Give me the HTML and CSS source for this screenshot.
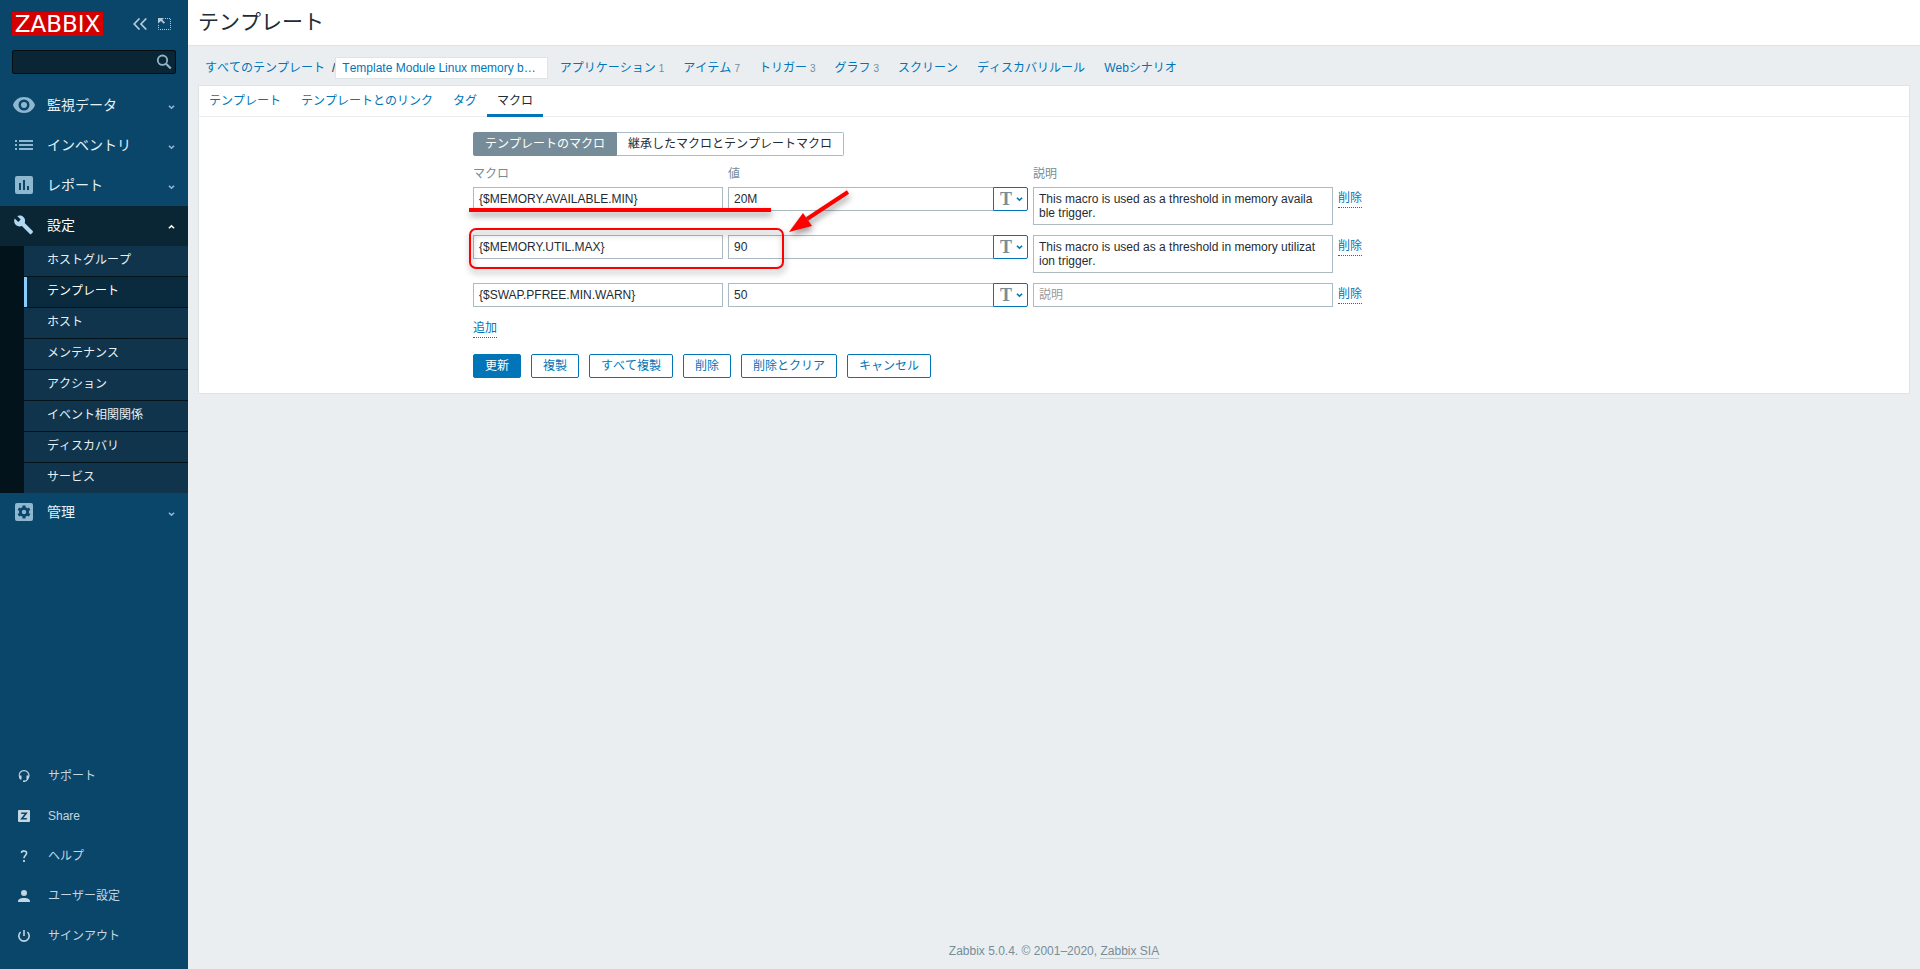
FILE: index.html
```html
<!DOCTYPE html>
<html lang="ja">
<head>
<meta charset="utf-8">
<title>テンプレート</title>
<link rel="stylesheet" href="styles.css">
</head>
<body>
<svg class="defs" width="0" height="0" aria-hidden="true">
  <symbol id="down" viewBox="0 0 8 6"><path d="M1 1.500 4 4.300 7 1.500" fill="none" stroke="currentColor" stroke-width="1.700"/></symbol>
  <symbol id="up" viewBox="0 0 8 6"><path d="M1 4.500 4 1.700 7 4.500" fill="none" stroke="currentColor" stroke-width="1.700"/></symbol>
</svg>
<aside class="sidebar">
  <div class="brand">
    <a class="logo" href="#">ZABBIX</a>
    <button class="icon-btn" type="button" aria-label="サイドバーを折りたたむ"><svg width="14" height="12" viewBox="0 0 14 12"><path d="M6.500 .5 1.200 6l5.300 5.500M13.300 .5 8 6l5.300 5.500" fill="none" stroke="currentColor" stroke-width="1.700"/></svg></button>
    <button class="icon-btn" type="button" aria-label="サイドバーを隠す"><svg width="13" height="12" viewBox="0 0 13 12"><path d="M7 .5H12.500V11.500H.5V6" fill="none" stroke="currentColor" stroke-dasharray="1 1"/><path d="M0 0h6L4.300 1.700 7 4.400 5.700 5.700 3 3 0 5.500z" fill="currentColor"/></svg></button>
  </div>
  <form class="search" role="search">
    <input type="text" aria-label="検索">
    <button type="button" aria-label="検索"><svg width="16" height="16" viewBox="0 0 16 16" fill="none" stroke="currentColor"><circle cx="6.500" cy="6.200" r="4.700" stroke-width="1.800"/><path d="m10 9.700 4.800 4.800" stroke-width="2.200"/></svg></button>
  </form>
  <nav class="menu">
    <a class="item" href="#"><svg class="ico" viewBox="0 0 24 24"><path fill-rule="evenodd" fill="currentColor" d="M12 4C6.500 4 2.500 7.500 1 12c1.500 4.500 5.500 8 11 8s9.500-3.500 11-8c-1.500-4.500-5.500-8-11-8zm0 2.500a5.500 5.500 0 1 1 0 11 5.500 5.500 0 0 1 0-11zM12 9a3 3 0 1 0 0 6 3 3 0 0 0 0-6z"/></svg><span>監視データ</span><svg class="arr"><use href="#down"/></svg></a>
    <a class="item" href="#"><svg class="ico" viewBox="0 0 24 24"><path fill="currentColor" d="M3 7h2v2H3zm4 0h14v2H7zM3 11h2v2H3zm4 0h14v2H7zM3 15h2v2H3zm4 0h14v2H7z"/></svg><span>インベントリ</span><svg class="arr"><use href="#down"/></svg></a>
    <a class="item" href="#"><svg class="ico" viewBox="0 0 24 24"><path fill="currentColor" fill-rule="evenodd" d="M5 3h14a2 2 0 0 1 2 2v14a2 2 0 0 1-2 2H5a2 2 0 0 1-2-2V5a2 2 0 0 1 2-2zm2 7v7h2v-7zm4-3v10h2V7zm4 6v4h2v-4z"/></svg><span>レポート</span><svg class="arr"><use href="#down"/></svg></a>
    <a class="item open" href="#"><svg class="ico" viewBox="0 0 24 24"><path fill="currentColor" d="m20.700 18-8-8c.8-2 .4-4.400-1.300-6C9.700 2.500 7.200 2.200 5.200 3.100l3.500 3.500-2.400 2.400L2.700 5.500c-1 2-.6 4.600 1 6.300 1.700 1.700 4.100 2.100 6.200 1.300l8 8c.4.400.9.400 1.300 0l1.500-1.700c.4-.3.400-.9 0-1.400z"/></svg><span>設定</span><svg class="arr"><use href="#up"/></svg></a>
    <div class="submenu">
      <a href="#">ホストグループ</a>
      <a class="current" href="#">テンプレート</a>
      <a href="#">ホスト</a>
      <a href="#">メンテナンス</a>
      <a href="#">アクション</a>
      <a href="#">イベント相関関係</a>
      <a href="#">ディスカバリ</a>
      <a href="#">サービス</a>
    </div>
    <a class="item" href="#"><svg class="ico" viewBox="0 0 24 24"><rect x="3" y="3" width="18" height="18" rx="2" fill="currentColor"/><g fill="#0a466a"><circle cx="12" cy="12" r="5"/><path d="M10.500 5.500h3v13h-3z"/><path d="M10.500 5.500h3v13h-3z" transform="rotate(60 12 12)"/><path d="M10.500 5.500h3v13h-3z" transform="rotate(120 12 12)"/></g><circle cx="12" cy="12" r="2.200" fill="currentColor"/></svg><span>管理</span><svg class="arr"><use href="#down"/></svg></a>
  </nav>
  <nav class="user-menu">
    <a href="#"><svg viewBox="0 0 12 12"><path d="M2.800 9C.8 7 1 4 2.200 2.400c1.800-2.300 5.800-2.300 7.600 0C11 4 11.200 7 9.700 9c-.7 1.500-1.700 2.200-3.200 2.200" fill="none" stroke="currentColor" stroke-width="1.200"/><path d="M1 5.500h2.500v4H2zM8.500 5.500H11l-1 4H8.500zM5 10.500h2.200V12H5z" fill="currentColor"/></svg>サポート</a>
    <a href="#"><svg viewBox="0 0 12 12"><rect width="12" height="12" rx="1" fill="currentColor"/><path d="M3.200 3.200h5L3.800 8.800h5" fill="none" stroke="#0a466a" stroke-width="1.600"/></svg>Share</a>
    <a href="#"><svg viewBox="0 0 12 12"><path d="M3.500 3C3.700.2 8.600.2 8.600 3.200c0 2-2.600 2.300-2.600 5" fill="none" stroke="currentColor" stroke-width="1.600"/><path d="M5.100 10h1.800v2H5.100z" fill="currentColor"/></svg>ヘルプ</a>
    <a href="#"><svg viewBox="0 0 12 12" fill="currentColor"><circle cx="6" cy="3" r="3"/><path d="M0 12v-1.500C1 8.500 3.500 8 6 8s5 .5 6 2.500V12z"/></svg>ユーザー設定</a>
    <a href="#"><svg viewBox="0 0 12 12" fill="none" stroke="currentColor" stroke-width="1.600"><path d="M2.600 2a5.200 5.200 0 1 0 6.800 0M6 0v6"/></svg>サインアウト</a>
  </nav>
</aside>
<div class="page">
  <header class="title"><h1>テンプレート</h1></header>
  <main>
    <nav class="crumbs">
      <a href="#">すべてのテンプレート</a><span class="slash">/</span><a class="selected" href="#">Template Module Linux memory b…</a>
      <ul>
        <li><a href="#">アプリケーション</a><sup>1</sup></li>
        <li><a href="#">アイテム</a><sup>7</sup></li>
        <li><a href="#">トリガー</a><sup>3</sup></li>
        <li><a href="#">グラフ</a><sup>3</sup></li>
        <li><a href="#">スクリーン</a></li>
        <li><a href="#">ディスカバリルール</a></li>
        <li><a href="#">Webシナリオ</a></li>
      </ul>
    </nav>
    <section class="card">
      <nav class="tabs">
        <a href="#">テンプレート</a><a href="#">テンプレートとのリンク</a><a href="#">タグ</a><a class="active" href="#">マクロ</a>
      </nav>
      <form class="form">
        <div class="segment"><button class="on" type="button">テンプレートのマクロ</button><button type="button">継承したマクロとテンプレートマクロ</button></div>
        <div class="macros">
          <table>
            <thead><tr><th class="c-name">マクロ</th><th class="c-value">値</th><th class="c-desc">説明</th><th></th></tr></thead>
            <tbody>
              <tr>
                <td><input type="text" aria-label="マクロ" value="{$MEMORY.AVAILABLE.MIN}"></td>
                <td><div class="value"><input type="text" aria-label="値" value="20M"><button type="button" aria-label="種別"><b>T</b><svg><use href="#down"/></svg></button></div></td>
                <td><textarea aria-label="説明" rows="2">This macro is used as a threshold in memory available trigger.</textarea></td>
                <td><button class="link" type="button">削除</button></td>
              </tr>
              <tr>
                <td><input type="text" aria-label="マクロ" value="{$MEMORY.UTIL.MAX}"></td>
                <td><div class="value"><input type="text" aria-label="値" value="90"><button type="button" aria-label="種別"><b>T</b><svg><use href="#down"/></svg></button></div></td>
                <td><textarea aria-label="説明" rows="2">This macro is used as a threshold in memory utilization trigger.</textarea></td>
                <td><button class="link" type="button">削除</button></td>
              </tr>
              <tr>
                <td><input type="text" aria-label="マクロ" value="{$SWAP.PFREE.MIN.WARN}"></td>
                <td><div class="value"><input type="text" aria-label="値" value="50"><button type="button" aria-label="種別"><b>T</b><svg><use href="#down"/></svg></button></div></td>
                <td><textarea aria-label="説明" rows="1" placeholder="説明"></textarea></td>
                <td><button class="link" type="button">削除</button></td>
              </tr>
            </tbody>
          </table>
          <svg class="marks" width="400" height="110" viewBox="0 0 400 110" fill="none" stroke="#f00" aria-hidden="true">
            <path d="M6 35H308" stroke-width="4"/>
            <rect x="7" y="54" width="313" height="39" rx="6" stroke-width="2"/>
            <path d="M344 44 385 17" stroke-width="4"/>
            <path d="M326 57 340 38 349 51z" fill="#f00" stroke="none"/>
          </svg>
        </div>
        <button class="link" type="button">追加</button>
        <div class="actions">
          <button class="primary" type="button">更新</button>
          <button type="button">複製</button>
          <button type="button">すべて複製</button>
          <button type="button">削除</button>
          <button type="button">削除とクリア</button>
          <button type="button">キャンセル</button>
        </div>
      </form>
    </section>
  </main>
  <footer>Zabbix 5.0.4. © 2001–2020, <a href="#">Zabbix SIA</a></footer>
</div>
</body>
</html>
```
FILE: styles.css
```css
* { box-sizing: border-box; }
body {
  margin: 0;
  display: flex;
  min-height: 100vh;
  background: #ebeef0;
  color: #1f2c33;
  font: 12px/14px "Liberation Sans", "Noto Sans CJK JP", sans-serif;
  font-kerning: none;
}
button, input, textarea { font: inherit; color: inherit; margin: 0; }
button { cursor: pointer; font-kerning: none; }
input { font-kerning: normal; }
a { color: #0275b8; text-decoration: none; }
.defs { position: absolute; }

/* Sidebar */
.sidebar {
  flex: 0 0 188px;
  display: flex;
  flex-direction: column;
  background: #0a466a;
}
.brand { display: flex; align-items: center; padding: 12px 17px 0 12px; }
.logo {
  width: 91px;
  margin-right: auto;
  background: #d40000;
  color: #fff;
  font-family: "DejaVu Sans", sans-serif;
  font-size: 23px;
  line-height: 24px;
  text-align: center;
}
.icon-btn {
  display: flex;
  padding: 0;
  margin-left: 11px;
  border: 0;
  background: none;
  color: #b3cbd9;
}
.search {
  display: flex;
  height: 24px;
  margin: 14px 12px 12px;
  border: 1px solid #030d13;
  border-radius: 2px;
  background: #0a2635;
}
.search input { flex: 1; min-width: 0; border: 0; background: none; color: #fff; }
.search button { display: flex; align-items: center; padding: 0 3px; border: 0; background: none; color: #8fb3c9; }
.item {
  display: flex;
  align-items: center;
  height: 40px;
  padding: 0 13px 2px 12px;
  color: #e6f0f6;
  font-size: 14px;
}
.item span { flex: 1; }
.ico { width: 24px; height: 24px; margin-right: 11px; color: #8fb7d0; }
.arr { width: 7px; height: 6px; margin-top: 3px; color: #8fb7d0; }
.item.open { background: #0a2635; color: #fff; }
.open .ico { color: #b3d9f0; }
.open .arr { color: #fff; }
.submenu {
  display: grid;
  gap: 1px;
  border-left: 24px solid #03131c;
  background: #03131c;
}
.submenu a {
  height: 30px;
  padding-left: 23px;
  background: #0f344c;
  color: #e6f0f6;
  line-height: 29px;
}
.submenu .current { padding-left: 20px; border-left: 3px solid #87ceff; background: #0a2a3d; color: #fff; }
.user-menu { margin-top: auto; padding-bottom: 13px; }
.user-menu a { display: flex; align-items: center; height: 40px; padding-left: 18px; color: #c3d7e2; }
.user-menu svg { width: 12px; height: 12px; margin-right: 18px; }

/* Page */
.page { flex: 1; min-width: 0; display: flex; flex-direction: column; }
.title { height: 46px; padding: 0 10px; border-bottom: 1px solid #dfe4e7; background: #fff; }
h1 { margin: 0; font-size: 21px; font-weight: 400; line-height: 44px; }
main { padding: 11px 10px 0; }
.crumbs { display: flex; align-items: center; height: 22px; padding-left: 7px; }
.slash { margin-left: 7px; }
.selected { padding: 3px 11px 3px 6px; border: 1px solid #dfe4e7; background: #fff; }
.crumbs ul { display: flex; gap: 19px; margin: 0; padding: 0 0 0 12px; list-style: none; }
.crumbs sup { margin-left: 3px; color: #768d99; font-size: 10px; line-height: 14px; vertical-align: baseline; }
.card { margin-top: 6px; border: 1px solid #dfe4e7; background: #fff; }
.tabs { display: flex; height: 31px; border-bottom: 1px solid #ebeef0; }
.tabs a { height: 31px; padding: 0 10px; line-height: 30px; }
.tabs .active { border-bottom: 3px solid #0275b8; color: #1f2c33; }

/* Macro form */
.form { padding: 15px 10px 15px 274px; }
.segment { display: flex; }
.segment button {
  height: 24px;
  padding: 0 11px;
  border: 1px solid #acbbc2;
  border-left: 0;
  border-radius: 0 2px 2px 0;
  background: #fff;
}
.segment .on { border: 1px solid #768d99; border-radius: 2px 0 0 2px; background: #768d99; color: #fff; }
.macros { position: relative; margin-top: 11px; }
table { border-collapse: collapse; }
th { padding: 0 5px 6px 0; color: #768d99; font-weight: 400; line-height: 14px; text-align: left; }
td { padding: 0 5px 10px 0; vertical-align: top; }
tbody tr:last-child td { padding-bottom: 0; }
.c-name { width: 255px; }
.c-value, .c-desc { width: 305px; }
input, textarea { display: block; width: 100%; height: 24px; padding: 0 5px; border: 1px solid #acbbc2; background: #fff; }
textarea { height: auto; padding: 4px 15px 4px 5px; resize: none; overflow: hidden; word-break: break-all; }
textarea::placeholder { color: #999; }
.value { display: flex; }
.value input { flex: 1; min-width: 0; border-right: 0; }
.value button {
  display: flex;
  align-items: center;
  justify-content: space-between;
  width: 35px;
  height: 24px;
  padding: 0 4px 0 6px;
  border: 1px solid #0275b8;
  border-radius: 0 2px 2px 0;
  background: #fff;
  color: #0275b8;
}
.value b { color: #768d99; font: bold 18px/20px "Liberation Serif", serif; }
.value svg { width: 7px; height: 6px; }
.link { display: block; margin-top: 4px; padding: 0 0 2px; border: 0; border-bottom: 1px dotted #0275b8; background: none; color: #0275b8; }
.marks { position: absolute; left: -10px; top: 8px; pointer-events: none; filter: drop-shadow(1px 4px 3px #0006); }
.macros + .link { margin-top: 14px; }
.actions { display: flex; gap: 10px; margin-top: 16px; }
.actions button { height: 24px; padding: 0 11px; border: 1px solid #0275b8; border-radius: 2px; background: #fff; color: #0275b8; }
.actions .primary { background: #0275b8; color: #fff; }

footer { margin-top: auto; padding-bottom: 11px; color: #768d99; text-align: center; }
footer a { border-bottom: 1px solid #c0c8cc; color: inherit; }
```
